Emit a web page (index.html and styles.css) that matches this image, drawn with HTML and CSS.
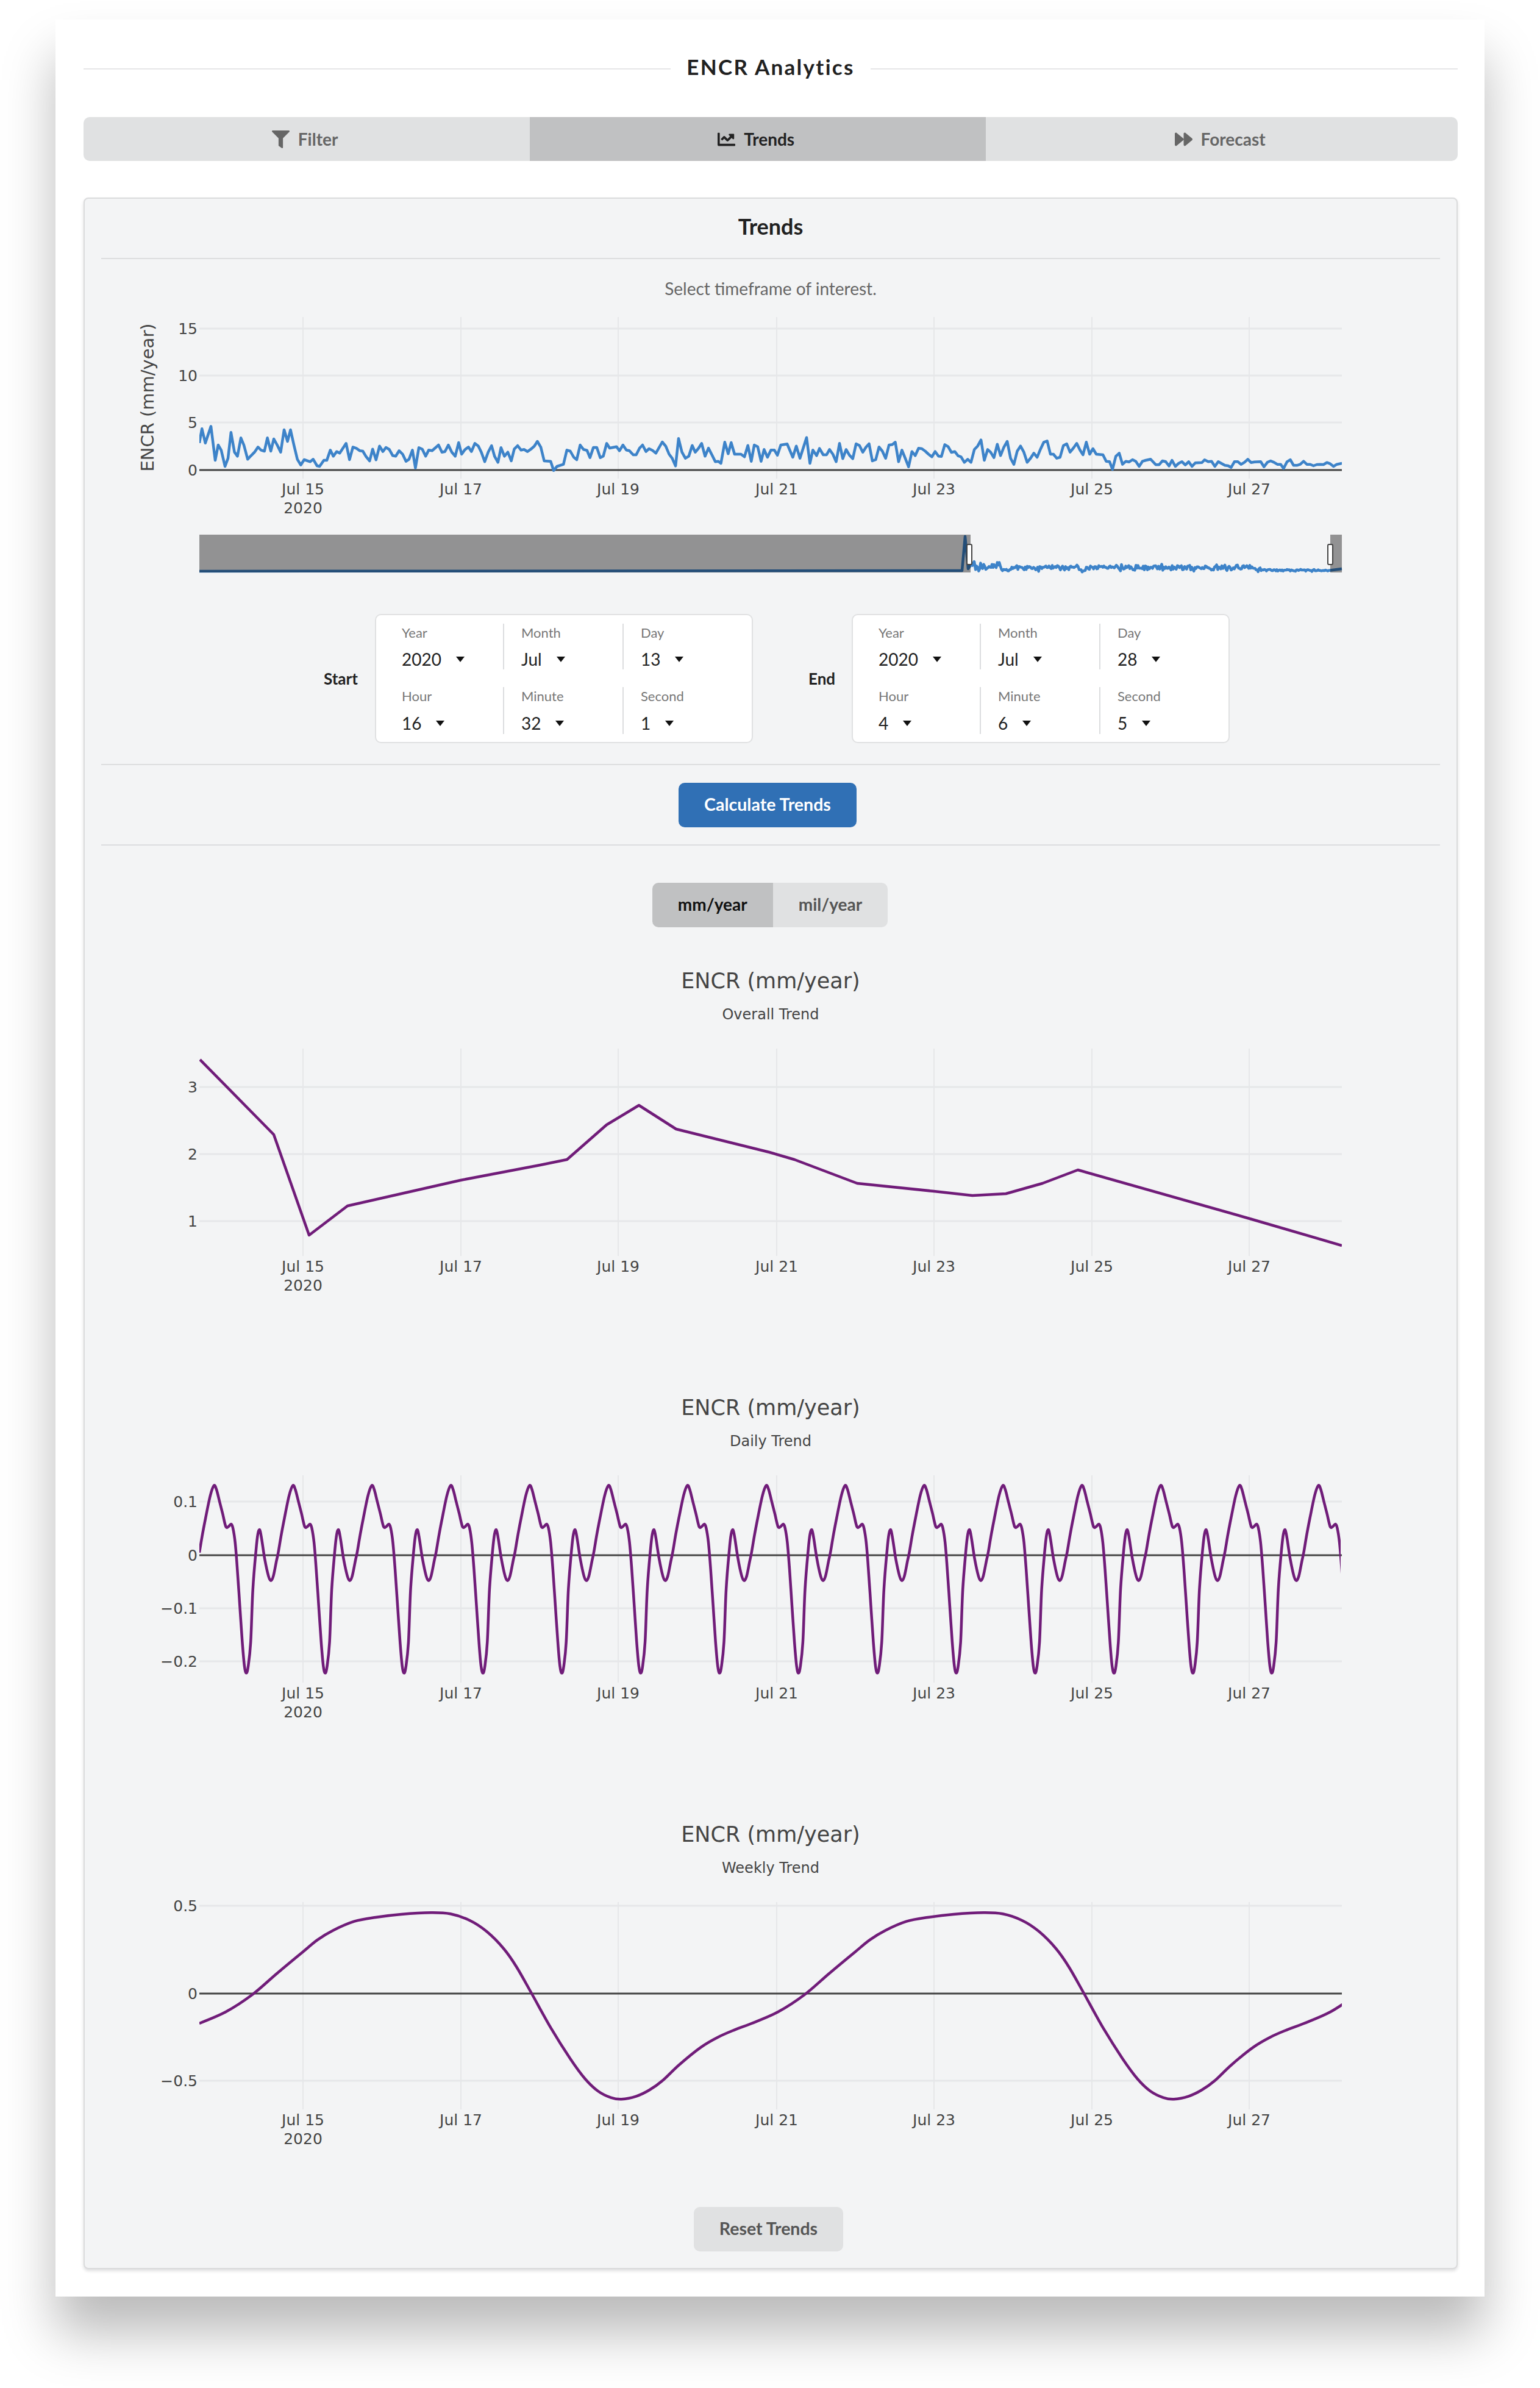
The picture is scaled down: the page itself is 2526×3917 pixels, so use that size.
FILE: index.html
```html
<!DOCTYPE html>
<html lang="en">
<head>
    <meta charset="UTF-8">
    <title>ENCR Analytics</title>
    <link rel="stylesheet" href="styles.css">
</head>
<body>
    <div class="page">
        <div class="page-title"><span>ENCR Analytics</span></div>

        <div class="tabs">
            <a class="tab tab-filter">
                <svg class="icon" viewBox="0 0 512 512"><path d="M487.976 0H24.028C2.71 0-8.047 25.866 7.058 40.971L192 225.941V432c0 7.831 3.821 15.17 10.237 19.662l80 55.98C298.02 518.69 320 507.493 320 487.98V225.941l184.947-184.97C520.021 25.896 509.338 0 487.976 0z"/></svg>
                Filter
            </a>
            <a class="tab tab-trends active">
                <svg class="icon" viewBox="0 0 512 512"><path d="M496 384H64V80c0-8.84-7.16-16-16-16H16C7.16 64 0 71.16 0 80v336c0 17.67 14.33 32 32 32h464c8.84 0 16-7.16 16-16v-32c0-8.84-7.16-16-16-16zM464 96H345.94c-21.38 0-32.09 25.85-16.97 40.97l32.4 32.4L288 242.75l-73.37-73.37c-12.5-12.5-32.76-12.5-45.25 0l-68.69 68.69c-6.25 6.25-6.25 16.38 0 22.63l22.62 22.62c6.25 6.25 16.38 6.25 22.63 0L192 237.25l73.37 73.37c12.5 12.5 32.76 12.5 45.25 0l96-96 32.4 32.4c15.12 15.12 40.97 4.41 40.97-16.97V112c0-8.84-7.16-16-16-16z"/></svg>
                Trends
            </a>
            <a class="tab tab-forecast">
                <svg class="icon" viewBox="0 0 512 512"><path d="M500.5 231.4l-192-160C287.9 54.3 256 68.6 256 96v320c0 27.4 31.9 41.8 52.5 24.6l192-160c14.7-12.3 14.7-36.9 0-49.2zm-256 0l-192-160C31.9 54.3 0 68.6 0 96v320c0 27.4 31.9 41.8 52.5 24.6l192-160c14.7-12.3 14.7-36.9 0-49.2z"/></svg>
                Forecast
            </a>
        </div>

        <div class="panel">
            <h2 class="panel-title">Trends</h2>
            <p class="hint">Select timeframe of interest.</p>

            <div class="chart chart-range" id="chart-range"></div>

            <div class="date-row">
                <div class="date-label date-label-start">Start</div>
                <div class="date-box">
                    <div class="date-cell"><div class="field-name">Year</div><div class="field-value">2020<i class="caret"></i></div></div>
                    <div class="date-cell"><div class="field-name">Month</div><div class="field-value">Jul<i class="caret"></i></div></div>
                    <div class="date-cell"><div class="field-name">Day</div><div class="field-value">13<i class="caret"></i></div></div>
                    <div class="date-cell"><div class="field-name">Hour</div><div class="field-value">16<i class="caret"></i></div></div>
                    <div class="date-cell"><div class="field-name">Minute</div><div class="field-value">32<i class="caret"></i></div></div>
                    <div class="date-cell"><div class="field-name">Second</div><div class="field-value">1<i class="caret"></i></div></div>
                </div>
                <div class="date-label date-label-end">End</div>
                <div class="date-box">
                    <div class="date-cell"><div class="field-name">Year</div><div class="field-value">2020<i class="caret"></i></div></div>
                    <div class="date-cell"><div class="field-name">Month</div><div class="field-value">Jul<i class="caret"></i></div></div>
                    <div class="date-cell"><div class="field-name">Day</div><div class="field-value">28<i class="caret"></i></div></div>
                    <div class="date-cell"><div class="field-name">Hour</div><div class="field-value">4<i class="caret"></i></div></div>
                    <div class="date-cell"><div class="field-name">Minute</div><div class="field-value">6<i class="caret"></i></div></div>
                    <div class="date-cell"><div class="field-name">Second</div><div class="field-value">5<i class="caret"></i></div></div>
                </div>
            </div>

            <div class="calc-row">
                <button type="button" class="btn btn-primary">Calculate Trends</button>
            </div>

            <div class="unit-row">
                <div class="unit-toggle">
                    <button type="button" class="btn unit active">mm/year</button>
                    <button type="button" class="btn unit">mil/year</button>
                </div>
            </div>

            <div class="chart chart-trend" id="chart-overall"></div>
            <div class="chart chart-trend" id="chart-daily"></div>
            <div class="chart chart-trend" id="chart-weekly"></div>

            <div class="reset-row">
                <button type="button" class="btn btn-reset">Reset Trends</button>
            </div>
        </div>
    </div>

    <script src="charts.js"></script>
</body>
</html>
```

FILE: styles.css
```css
body {
    margin: 0;
    padding: 32px 91px 150px;
    background-color: #fff;
    font-family: "Lato", "Open Sans", sans-serif;
    color: #212121;
}

.page {
    background-color: #fff;
    padding: 56px 44px 45px 46px;
    box-shadow: 0 60px 80px rgba(0, 0, 0, 0.27);
}

.page-title {
    display: flex;
    align-items: center;
    gap: 26px;
    height: 50px;
    font-size: 35px;
    font-weight: 700;
    letter-spacing: 2.3px;
}

.page-title span {
    padding-bottom: 8px;
}

.page-title::before,
.page-title::after {
    content: "";
    flex: 1;
    height: 2px;
    background-color: #e6e6e7;
}

.tabs {
    display: flex;
    height: 72px;
    margin-top: 54px;
}

.tab {
    display: flex;
    align-items: center;
    justify-content: center;
    gap: 14px;
    padding-right: 6px;
    background-color: #e0e1e2;
    color: #666;
    font-size: 28px;
    font-weight: 700;
}

.tab-filter {
    flex: 732;
    border-radius: 10px 0 0 10px;
}

.tab-trends {
    flex: 748;
}

.tab-forecast {
    flex: 774;
    border-radius: 0 10px 10px 0;
}

.tab.active {
    background-color: #c0c1c2;
    color: #222;
}

.icon {
    width: 29px;
    height: 29px;
    fill: currentColor;
}

.panel {
    margin-top: 60px;
    padding: 0 27px 27px;
    background-color: #f3f4f5;
    border: 2px solid #dadbdc;
    border-radius: 8px;
    box-shadow: 0 3px 5px rgba(34, 36, 38, 0.15);
}

.panel-title {
    height: 97px;
    margin: 0;
    line-height: 90px;
    font-size: 36px;
    font-weight: 700;
    text-align: center;
    border-bottom: 2px solid #dcdddf;
}

.hint {
    margin: 28px 0 2px;
    line-height: 40px;
    font-size: 28px;
    text-align: center;
    color: #666;
}

.chart svg {
    display: block;
}

.chart-trend {
    height: 600px;
    margin-top: 100px;
}

.unit-row + .chart-trend {
    margin-top: 39px;
}

.grid-line {
    stroke: #e6e7e9;
    stroke-width: 2px;
}

.grid-line-h {
    stroke-width: 3px;
}

.zero-line {
    stroke: #444;
    stroke-width: 3px;
}

.tick-label {
    font-family: "DejaVu Sans", sans-serif;
    font-size: 25px;
    fill: #444;
}

.chart-title {
    font-family: "DejaVu Sans", sans-serif;
    font-size: 35px;
    fill: #444;
}

.chart-subtitle {
    font-family: "DejaVu Sans", sans-serif;
    font-size: 24px;
    fill: #444;
}

.axis-title {
    font-family: "DejaVu Sans", sans-serif;
    font-size: 29px;
    fill: #444;
}

.data-line {
    fill: none;
    stroke-width: 4.5px;
    stroke-linejoin: round;
}

.data-line-blue {
    stroke: #3d83c9;
}

.data-line-purple {
    stroke: #701c79;
}

.slider-mask {
    fill: rgba(0, 0, 0, 0.4);
}

.slider-handle {
    fill: #fff;
    stroke: #444;
    stroke-width: 2px;
}

.date-row {
    display: flex;
    align-items: center;
    margin-top: 17px;
    padding-left: 365px;
}

.date-label {
    font-size: 26px;
    font-weight: 700;
}

.date-label-start {
    width: 84px;
}

.date-label-end {
    width: 71px;
    margin-left: 91px;
}

.date-box {
    display: grid;
    grid-template-columns: 196px 196px 196px;
    grid-template-rows: 75px 77px;
    row-gap: 29px;
    box-sizing: border-box;
    width: 620px;
    height: 212px;
    padding: 14px 0 13px 14px;
    background-color: #fff;
    border: 2px solid #e0e1e2;
    border-radius: 10px;
}

.date-cell {
    padding-left: 28px;
    border-right: 2px solid #dcdddf;
}

.date-cell:nth-child(3n) {
    border-right: none;
}

.field-name {
    line-height: 30px;
    font-size: 22px;
    color: #777;
}

.field-value {
    display: flex;
    align-items: center;
    margin-top: 10px;
    line-height: 36px;
    font-size: 28px;
    color: #222;
}

.date-cell:nth-child(n+4) .field-value {
    margin-top: 11px;
}

.caret {
    width: 0;
    height: 0;
    margin-left: 24px;
    border-style: solid;
    border-width: 9px 7px 0;
    border-color: #111 transparent transparent;
}

.calc-row {
    margin-top: 34px;
    padding: 29px 10px 28px 0;
    display: flex;
    justify-content: center;
    border-top: 2px solid #dcdddf;
    border-bottom: 2px solid #dcdddf;
}

.btn {
    height: 73px;
    padding: 0 42px 3px;
    border: none;
    border-radius: 10px;
    font-family: "Lato", "Open Sans", sans-serif;
    font-size: 28.5px;
    font-weight: 700;
}

.btn-primary {
    background-color: #3070b5;
    color: #fff;
}

.unit-row {
    display: flex;
    justify-content: center;
    margin-top: 61px;
    padding-right: 2px;
}

.unit-toggle {
    display: flex;
}

.unit {
    background-color: #e0e1e2;
    color: #555;
    font-size: 28px;
    border-radius: 0 10px 10px 0;
}

.unit.active {
    background-color: #c0c1c2;
    color: #111;
    border-radius: 10px 0 0 10px;
}

.reset-row {
    display: flex;
    justify-content: center;
    margin-top: 60px;
    padding-right: 7px;
}

.btn-reset {
    background-color: #e0e1e2;
    color: #555;
}
```

FILE: charts.js
```js
// draws the plotly style charts. all coordinates are page pixels, the viewBox of each svg does the offset
const SVG_NS = 'http://www.w3.org/2000/svg';
const PLOT_LEFT = 327;
const PLOT_RIGHT = 2201;
const DAY_TICKS = [
    [497, 'Jul 15'], [756, 'Jul 17'], [1014, 'Jul 19'], [1274, 'Jul 21'],
    [1532, 'Jul 23'], [1791, 'Jul 25'], [2049, 'Jul 27']
];

// hourly encr series, read off in two stretches
const encrLeft = [181,680,187,610,195,680,208,598,218,765,225,690,232,715,241,795,248,755,255,628,263,725,270,745,278,655,285,690,294,760,302,742,310,725,318,700,325,715,333,720,340,655,348,720,355,660,363,690,371,725,379,615,387,672,394,615,402,690,410,760,418,788,426,762,440,772,447,760,456,792,462,795,472,765,479,765,487,715,494,745,502,722,509,730,524,682,532,762,540,700,548,706,556,718,563,720,571,748,579,768,586,710,594,763,602,695,610,722,617,702,625,712,633,742,640,745,648,718,656,735,664,770,671,760,679,715,686,803,694,703,702,710,710,745,717,715,725,718,740,690,748,725,755,722,763,690,771,725,779,745,787,678,794,735,802,712,810,700,817,722,825,682,833,695,840,725,848,772,856,725,864,693,871,745,879,775,886,703,894,745,902,725,910,768,917,710,925,693,933,715,940,712,948,722,956,710,964,695,971,672,979,700,987,768,1002,770,1009,815,1017,795,1032,785,1040,715,1048,720,1056,750,1063,762,1071,690,1079,712,1087,716,1094,752,1102,702,1110,702,1118,752,1125,745,1133,682,1140,705,1156,698,1163,718,1171,690,1179,715,1186,718,1195,738,1202,738,1210,705,1217,690,1225,722,1232,708,1240,716,1248,730,1263,675,1271,695,1279,735,1286,755,1294,793,1301,658,1309,725,1317,755,1325,745,1333,692,1340,725,1348,705,1355,682,1363,745,1371,705,1379,738,1387,772,1394,770,1400,780,1409,676,1417,733,1424,678,1432,735,1447,735,1455,748,1463,692,1471,770,1478,690,1486,698,1494,770,1501,712,1509,750,1517,715,1525,715,1532,740,1540,690,1555,685,1568,750];
const encrRight = [10,695,20,755,38,653,47,780,55,715,65,742,73,707,83,738,92,738,100,712,109,735,118,772,127,682,136,757,145,712,154,740,163,757,172,684,181,692,190,725,199,700,207,684,216,768,225,762,234,700,243,720,252,755,261,690,270,688,278,676,287,772,296,715,305,755,314,797,323,722,332,742,341,706,350,708,359,720,368,735,377,748,386,722,395,745,403,746,412,688,421,698,430,726,439,722,448,743,456,748,465,775,474,760,483,775,492,712,501,695,510,665,519,765,528,712,536,725,545,752,554,686,563,742,572,700,581,672,590,755,599,785,608,720,617,695,626,725,635,775,644,755,653,730,662,750,671,710,680,676,689,670,698,735,706,735,715,755,724,750,733,693,742,684,751,725,760,705,769,682,778,715,786,738,795,676,804,735,813,708,822,735,840,738,849,770,858,772,866,810,875,745,884,730,893,785,902,770,911,773,920,762,929,770,938,795,947,770,956,765,969,760,983,787,992,787,1001,768,1010,772,1019,793,1027,765,1036,795,1045,780,1054,772,1063,788,1072,772,1081,795,1090,778,1108,776,1115,763,1125,772,1134,770,1143,795,1152,772,1170,790,1179,792,1187,800,1196,772,1205,772,1214,785,1223,775,1232,760,1241,776,1250,773,1267,772,1276,797,1285,775,1294,768,1303,775,1312,785,1321,785,1329,805,1338,773,1347,762,1356,790,1365,790,1374,785,1383,770,1392,785,1401,785,1410,792,1419,786,1428,785,1437,786,1446,776,1455,782,1464,795,1473,785,1487,780];

function toPoints(flat, mapX, mapY) {
    const points = [];
    for (let i = 0; i < flat.length; i += 2) {
        points.push([mapX(flat[i]), mapY(flat[i + 1])]);
    }
    return points;
}

const encrSeries = toPoints(encrLeft, x => 200 + x / 1.425, y => 500 + y / 3)
    .concat(toPoints(encrRight, x => 1300 + x / 1.65, y => 500 + y / 3));

const overallSeries = [
    [328, 1738], [449, 1861], [507, 2026], [570, 1978], [755, 1936], [886, 1911], [930, 1902],
    [995, 1845], [1048, 1813], [1109, 1852], [1262, 1890], [1303, 1902], [1406, 1941], [1532, 1954],
    [1595, 1961], [1650, 1958], [1710, 1941], [1768, 1919], [2050, 1999], [2201, 2043]
];

// one day of the daily component, x is an offset from the plot edge
const dailyShape = [[0,440],[10,350],[20,270],[35,160],[47,110],[55,130],[65,190],[75,250],[85,312],[93,313],[102,300],[108,320],[115,390],[122,520],[130,700],[138,880],[145,1000],[151,1033],[157,1000],[165,880],[172,620],[182,430],[188,350],[194,328],[200,370],[210,470],[222,555],[230,578],[238,555],[248,480]];
// one week of the weekly component
const weeklyShape = [[138,657],[200,600],[262,515],[320,410],[380,305],[415,245],[450,200],[500,155],[550,135],[610,120],[680,112],[725,118],[770,150],[810,205],[850,290],[880,380],[915,510],[960,680],[1005,830],[1040,930],[1070,990],[1100,1022],[1125,1030],[1160,1015],[1190,985],[1220,940],[1260,860],[1310,775],[1350,725],[1390,688]];

function repeatShape(shape, period, mapX, mapY) {
    const points = [];
    for (let n = 0; ; n++) {
        for (const [x, y] of shape) {
            const px = mapX(x + n * period);
            points.push([px, mapY(y)]);
            if (px > PLOT_RIGHT + 20) {
                return points;
            }
        }
    }
}

const dailySeries = repeatShape(dailyShape, 253.6, x => PLOT_LEFT + x / 1.96, y => 2400 + y / 3);
const weeklySeries = repeatShape(weeklyShape, 1291, x => 230 + x / 1.425, y => 3100 + y / 3);

function linePath(points) {
    return 'M' + points.map(p => p[0].toFixed(1) + ' ' + p[1].toFixed(1)).join('L');
}

function smoothPath(points) {
    let d = 'M' + points[0].join(' ');
    for (let i = 0; i < points.length - 1; i++) {
        const p0 = points[Math.max(i - 1, 0)];
        const p1 = points[i];
        const p2 = points[i + 1];
        const p3 = points[Math.min(i + 2, points.length - 1)];
        const c1 = [p1[0] + (p2[0] - p0[0]) / 6, p1[1] + (p2[1] - p0[1]) / 6];
        const c2 = [p2[0] - (p3[0] - p1[0]) / 6, p2[1] - (p3[1] - p1[1]) / 6];
        d += 'C' + [c1[0], c1[1], c2[0], c2[1], p2[0], p2[1]].map(n => n.toFixed(1)).join(' ');
    }
    return d;
}

function add(parent, tag, attrs, text) {
    const node = document.createElementNS(SVG_NS, tag);
    for (const key in attrs) {
        node.setAttribute(key, attrs[key]);
    }
    if (text) {
        node.textContent = text;
    }
    parent.appendChild(node);
    return node;
}

function drawChart(id, opts) {
    const svg = add(document.getElementById(id), 'svg', {
        width: 2196,
        height: opts.height,
        viewBox: `166 ${opts.top} 2196 ${opts.height}`
    });

    const clipId = id + '-clip';
    const clipRight = opts.clipRight || PLOT_RIGHT;
    const clip = add(add(svg, 'defs', {}), 'clipPath', { id: clipId });
    add(clip, 'rect', { x: PLOT_LEFT, y: opts.gridTop, width: clipRight - PLOT_LEFT, height: opts.gridBottom - opts.gridTop });

    if (opts.title) {
        add(svg, 'text', { x: 1264, y: opts.top + 61, class: 'chart-title', 'text-anchor': 'middle' }, opts.title);
        add(svg, 'text', { x: 1264, y: opts.top + 112, class: 'chart-subtitle', 'text-anchor': 'middle' }, opts.subtitle);
    }

    for (const [x, label] of DAY_TICKS) {
        add(svg, 'line', { x1: x, x2: x, y1: opts.gridTop, y2: opts.gridBottom, class: 'grid-line' });
        add(svg, 'text', { x: x, y: opts.gridBottom + 26, class: 'tick-label', 'text-anchor': 'middle' }, label);
    }
    add(svg, 'text', { x: 497, y: opts.gridBottom + 57, class: 'tick-label', 'text-anchor': 'middle' }, '2020');

    for (const [y, label] of opts.yTicks) {
        const isZero = label === '0';
        add(svg, 'line', {
            x1: PLOT_LEFT, x2: PLOT_RIGHT, y1: y, y2: y,
            class: isZero ? 'zero-line' : 'grid-line grid-line-h'
        });
        add(svg, 'text', { x: 324, y: y + 9, class: 'tick-label', 'text-anchor': 'end' }, label);
    }

    add(svg, 'path', { d: opts.path, class: 'data-line ' + opts.lineClass, 'clip-path': `url(#${clipId})` });
    return svg;
}

// range chart on top, with the slider below it
const rangeSvg = drawChart('chart-range', {
    top: 495,
    height: 495,
    gridTop: 520,
    gridBottom: 785,
    yTicks: [[539, '15'], [616, '10'], [693, '5'], [771, '0']],
    path: linePath(encrSeries),
    lineClass: 'data-line-blue'
});

add(rangeSvg, 'text', {
    transform: 'translate(252 652) rotate(-90)',
    class: 'axis-title',
    'text-anchor': 'middle'
}, 'ENCR (mm/year)');

const SLIDER_LEFT = 1592;
const SLIDER_RIGHT = 2182;
const sliderPoints = [[PLOT_LEFT, 937], [1578, 936], [1583, 880], [1588, 933]];
for (const [x, y] of encrSeries) {
    sliderPoints.push([
        SLIDER_LEFT + (x - PLOT_LEFT) * (SLIDER_RIGHT - SLIDER_LEFT) / (PLOT_RIGHT - PLOT_LEFT),
        938 - (771 - y) / 15.4 * 3.6
    ]);
}
sliderPoints.push([PLOT_RIGHT, 933]);
add(rangeSvg, 'path', { d: linePath(sliderPoints), class: 'data-line data-line-blue' });
add(rangeSvg, 'rect', { x: PLOT_LEFT, y: 877, width: SLIDER_LEFT - PLOT_LEFT, height: 62, class: 'slider-mask' });
add(rangeSvg, 'rect', { x: SLIDER_RIGHT, y: 877, width: PLOT_RIGHT - SLIDER_RIGHT, height: 62, class: 'slider-mask' });
add(rangeSvg, 'rect', { x: SLIDER_LEFT - 6, y: 893, width: 8, height: 33, rx: 2, class: 'slider-handle' });
add(rangeSvg, 'rect', { x: SLIDER_RIGHT - 4, y: 893, width: 8, height: 33, rx: 2, class: 'slider-handle' });

drawChart('chart-overall', {
    top: 1560,
    height: 600,
    gridTop: 1720,
    gridBottom: 2060,
    title: 'ENCR (mm/year)',
    subtitle: 'Overall Trend',
    yTicks: [[1783, '3'], [1893, '2'], [2003, '1']],
    path: linePath(overallSeries),
    lineClass: 'data-line-purple'
});

drawChart('chart-daily', {
    top: 2260,
    height: 600,
    gridTop: 2420,
    gridBottom: 2760,
    clipRight: 2199,
    title: 'ENCR (mm/year)',
    subtitle: 'Daily Trend',
    yTicks: [[2463, '0.1'], [2551, '0'], [2638, '\u22120.1'], [2725, '\u22120.2']],
    path: smoothPath(dailySeries),
    lineClass: 'data-line-purple'
});

drawChart('chart-weekly', {
    top: 2960,
    height: 600,
    gridTop: 3120,
    gridBottom: 3460,
    title: 'ENCR (mm/year)',
    subtitle: 'Weekly Trend',
    yTicks: [[3126, '0.5'], [3270, '0'], [3413, '\u22120.5']],
    path: smoothPath(weeklySeries),
    lineClass: 'data-line-purple'
});
```
